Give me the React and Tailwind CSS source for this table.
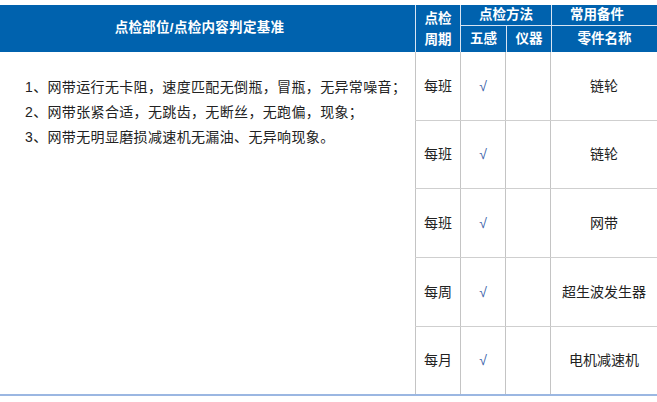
import React from "react";

const rows = [
  { h: "h-[69px]", period: "每班", part: "链轮" },
  { h: "h-[68px]", period: "每班", part: "链轮" },
  { h: "h-[69px]", period: "每班", part: "网带" },
  { h: "h-[69px]", period: "每周", part: "超生波发生器" },
  { h: "h-[67px]", period: "每月", part: "电机减速机" },
];

export default function App() {
  return (
    <div
      className="w-[657px] h-[402px] overflow-hidden bg-white pt-[5px] text-[14px] text-[#222]"
      style={{ fontFamily: '"Liberation Sans", "Noto Sans CJK SC", sans-serif' }}
    >
      <div className="w-[700px]">
        {/* header */}
        <div className="flex h-[47px] bg-[#0062ae] text-white font-bold text-[13.5px]">
          <div className="w-[415px] flex items-center justify-center pr-[16px] tracking-[0.3px]">点检部位/点检内容判定基准</div>
          <div className="w-[45px] border-l border-[#d8e4f2] flex flex-col items-center justify-center leading-[21px]">
            <span>点检</span>
            <span>周期</span>
          </div>
          <div className="flex-1 border-l border-[#d8e4f2] flex flex-col">
            <div className="h-[21px] flex border-b border-[#d8e4f2]">
              <div className="w-[90px] flex items-center justify-center">点检方法</div>
              <div className="flex-1 border-l border-[#d8e4f2] flex items-center justify-center pr-[58px]">常用备件</div>
            </div>
            <div className="flex-1 flex">
              <div className="w-[45px] flex items-center justify-center">五感</div>
              <div className="w-[45px] border-l border-[#d8e4f2] flex items-center justify-center">仪器</div>
              <div className="flex-1 border-l border-[#d8e4f2] flex items-center justify-center pr-[43px]">零件名称</div>
            </div>
          </div>
        </div>
        {/* body */}
        <div className="flex border-b-2 border-[#9bb7e2]">
          <div className="w-[415px] pl-[25px] pt-[23px] leading-[25px] tracking-[0.35px]">
            <p>1、网带运行无卡阻，速度匹配无倒瓶，冒瓶，无异常噪音；</p>
            <p>2、网带张紧合适，无跳齿，无断丝，无跑偏，现象；</p>
            <p>3、网带无明显磨损减速机无漏油、无异响现象。</p>
          </div>
          <div className="flex-1 flex flex-col">
            {rows.map((r, i) => (
              <div
                key={i}
                className={`${r.h} flex ${i < rows.length - 1 ? "border-b border-[#cfcfcf]" : ""}`}
              >
                <div className="w-[45px] border-l border-[#c4c4c4] flex items-center justify-center">{r.period}</div>
                <div className="w-[45px] border-l border-[#c4c4c4] flex items-center justify-center text-[#3b62a8]">√</div>
                <div className="w-[45px] border-l border-[#c4c4c4]"></div>
                <div className="flex-1 border-l border-[#c4c4c4] flex items-center justify-center pr-[43px]">{r.part}</div>
              </div>
            ))}
          </div>
        </div>
      </div>
    </div>
  );
}
